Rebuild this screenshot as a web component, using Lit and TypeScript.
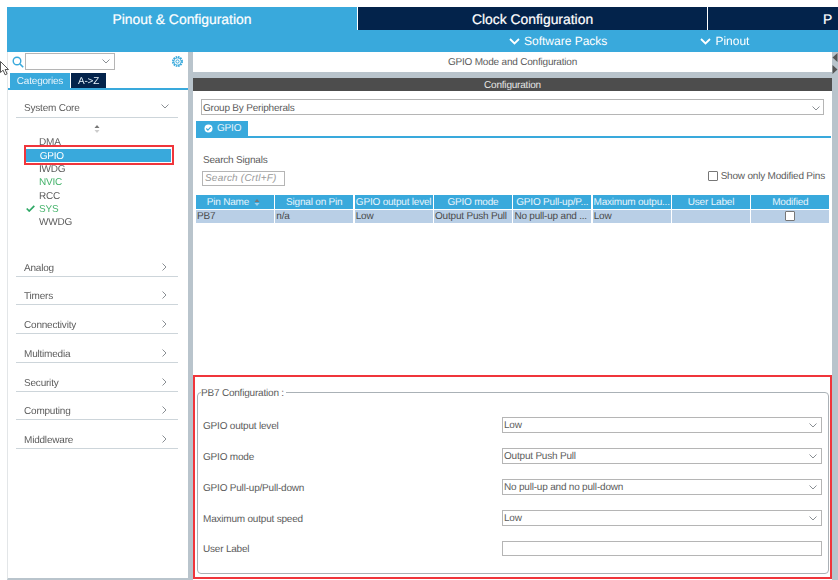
import { LitElement, html, css, svg } from "lit";
import { customElement } from "lit/decorators.js";

const chevDown = svg`<svg class="chev" width="8" height="5" viewBox="0 0 8 5"><path d="M.5.5L4 4 7.500.5" fill="none" stroke="#8a8f94" stroke-width="1"/></svg>`;
const chevRight = svg`<svg class="chevr" width="5" height="8" viewBox="0 0 5 8"><path d="M.5.5L4 4 .5 7.500" fill="none" stroke="#8a8f94" stroke-width="1"/></svg>`;
const chevWhite = svg`<svg width="11" height="7" viewBox="0 0 11 7"><path d="M1 1l4.500 4.500L10 1" fill="none" stroke="#fff" stroke-width="1.800"/></svg>`;

const cols = ["Pin Name", "Signal on Pin", "GPIO output level", "GPIO mode", "GPIO Pull-up/P...", "Maximum outpu...", "User Label", "Modified"];
const vals = ["PB7", "n/a", "Low", "Output Push Pull", "No pull-up and ...", "Low", "", ""];
const cats = ["Analog", "Timers", "Connectivity", "Multimedia", "Security", "Computing", "Middleware"];
const rows = [
  ["GPIO output level", "Low"],
  ["GPIO mode", "Output Push Pull"],
  ["GPIO Pull-up/Pull-down", "No pull-up and no pull-down"],
  ["Maximum output speed", "Low"],
];

@customElement("app-root")
export class AppRoot extends LitElement {
  static styles = css`
    :host { display: block; width: 838px; height: 580px; position: relative; overflow: hidden; background: #fff;
      font-family: "Liberation Sans", Arial, sans-serif; font-size: 10px; letter-spacing: -0.2px; text-rendering: geometricPrecision; color: #5c5c5c; }
    .page { width: 838px; height: 580px; box-sizing: border-box; padding: 7px 0 0 7px; filter: blur(0.3px); display: flex; flex-direction: column; }
    .tabs { display: flex; height: 23px; flex: none; gap: 1px; background: #fff; }
    .tab { display: flex; justify-content: center; align-items: center; font-size: 13.900px; letter-spacing: 0; color: #fff; box-sizing: border-box; -webkit-text-stroke: 0.2px #fff; }
    .tab.t1 { width: 350px; background: #39a9dc; }
    .tab.t2 { width: 349px; background: #03234b; }
    .tab.t3 { flex: 1; background: #03234b; justify-content: flex-start; padding-left: 115px; }
    .sub { height: 22px; flex: none; background: #39a9dc; color: #fff; font-size: 12px; letter-spacing: 0; display: flex; align-items: center; padding-left: 502px; box-sizing: border-box; gap: 93px; }
    .sub span { display: inline-flex; align-items: center; gap: 4px; }
    .body { flex: 1; display: flex; min-height: 0; }
    .side { width: 181px; flex: none; box-sizing: border-box; display: flex; flex-direction: column; background: #fff; border-left: 1px solid #e3e6e8; border-bottom: 2px solid #b9c4cc; }
    .sep { width: 5px; flex: none; background: #b9c4cc; }
    .search { display: flex; align-items: center; height: 17px; margin-top: 1px; padding-left: 4px; }
    .glass { margin-right: 1px; }
    .combo { width: 88px; height: 15px; border: 1px solid #b5b5b5; display: flex; align-items: center; justify-content: flex-end; }
    .combo .chev { margin-right: 4px; }
    .gear { margin-left: auto; margin-right: 4px; }
    .ctabs { display: flex; height: 15px; margin-top: 3px; padding-left: 2px; gap: 1px; align-items: stretch; }
    .ctab { display: flex; align-items: center; justify-content: center; color: #e8f4fb; padding-top: 1px; box-sizing: border-box; }
    .ctab.on { width: 60px; background: #39a9dc; }
    .ctab.off { width: 35px; background: #03234b; }
    .cline { height: 2px; background: #39a9dc; }
    .acc { margin: 0 10px 0 8px; }
    .head { height: 26px; display: flex; align-items: flex-end; justify-content: space-between; border-bottom: 1.5px solid #cdd5da; padding: 0 0 1px 8px; box-sizing: border-box; line-height: 13px; }
    .head.h0 { height: 27.500px; padding-bottom: 2px; }
    .head .chev { margin: 0 9px 6px 0; }
    .head .chevr { margin: 0 11px 4px 0; }
    .sort { display: flex; justify-content: center; margin: 7.500px 0 2.300px; height: 8px; }
    .items { display: flex; flex-direction: column; padding-left: 8px; }
    .item { height: 13.330px; line-height: 15px; padding-left: 15px; position: relative; }
    .item.sel { background: #39a9dc; color: #fff; margin-left: 2px; padding-left: 13.700px; box-sizing: border-box; width: 144.500px; }
    .item.sel::after { content: ""; position: absolute; left: -2px; right: -3.500px; top: -3.500px; bottom: -3.500px; border: 2px solid #f0353b; }
    .item.grn { color: #45b36b; }
    .item svg { position: absolute; left: 2px; top: 3px; }
    .cats { margin-top: 22.200px; display: flex; flex-direction: column; gap: 2.700px; }
    .main { width: 639px; flex: none; display: flex; flex-direction: column; background: #fff; }
    .mtitle { height: 20px; display: flex; align-items: center; justify-content: center; flex: none; padding-top: 1px; box-sizing: border-box; }
    .band { height: 6px; background: #b9c4cc; flex: none; }
    .dark { height: 13px; background: #4d4d4d; color: #e6e6e6; text-align: center; line-height: 15px; flex: none; }
    .group { margin: 8px 8px 0 8px; height: 16px; border: 1px solid #b5b5b5; border-bottom-width: 1.500px; display: flex; align-items: center; justify-content: space-between; padding: 2px 3px 0 1px; box-sizing: border-box; flex: none; }
    .gtab { margin: 6px 0 0 3px; width: 52px; height: 15px; background: #39a9dc; color: #e8f4fb; display: flex; align-items: center; gap: 4px; padding-left: 8px; box-sizing: border-box; flex: none; }
    .gline { height: 2px; margin: 0 1px 0 3px; background: #39a9dc; flex: none; }
    .sig { margin: 17px 7px 0 9px; flex: none; display: flex; justify-content: space-between; }
    .lab { line-height: 12px; padding-left: 1px; }
    .sinput { margin-top: 4px; width: 83px; height: 15px; box-sizing: border-box; border: 1px solid #b5b5b5; font-size: 10px; font-style: italic; color: #9a9a9a; line-height: 14px; padding-left: 2px; letter-spacing: 0.2px; }
    .mod { display: flex; align-items: center; gap: 3px; margin-top: 15px; height: 12px; }
    .cb { width: 8px; height: 8px; border: 1px solid #777; border-radius: 1px; background: #fff; display: inline-block; }
    .table { margin: 9px 0 0 3px; display: grid; grid-template-columns: repeat(8, 77.850px); column-gap: 1.500px; row-gap: 0.500px; flex: none; }
    .th { background: #39a9dc; color: #e8f4fb; height: 14px; line-height: 16px; text-align: center; white-space: nowrap; overflow: hidden; position: relative; }
    .th.first { padding-right: 14px; box-sizing: border-box; }
    .th svg { position: absolute; right: 14px; top: 4px; }
    .td { background: #b9cfe6; color: #4a4a4a; height: 13.500px; line-height: 13.500px; white-space: nowrap; overflow: hidden; display: flex; align-items: center; padding: 1px 0 0 1px; box-sizing: border-box; }
    .td.c { justify-content: center; padding: 0; }
    .spacer { flex: 1; }
    .cfg { height: 204px; margin-bottom: 1px; border: 2px solid #f0353b; box-sizing: border-box; padding: 15px 1px 2px 2px; flex: none; }
    .fs { height: 182px; box-sizing: border-box; border: 1px solid #aab1b6; border-radius: 4px; position: relative; padding: 24px 6px 0 5px; display: flex; flex-direction: column; gap: 15px; }
    .legend { position: absolute; left: 3px; top: -6.500px; background: #fff; padding-right: 2px; line-height: 13px; }
    .row { display: flex; justify-content: space-between; align-items: center; height: 16px; }
    .row > span { padding-top: 2px; }
    .sel2 { width: 320px; height: 16px; box-sizing: border-box; border: 1px solid #b5b5b5; border-bottom-width: 1.500px; display: flex; align-items: center; justify-content: space-between; padding: 1px 4px 0 1px; }
    .row.last { height: 15px; }
    .sel2.blank { height: 15px; border-bottom-width: 1px; }
    .rgt { flex: 1; background: #b9c4cc; position: relative; }
    .rgt svg { position: absolute; left: 0; top: 1px; }
    .cursor { position: absolute; left: 0; top: 61px; }
  `;

  render() {
    return html`
      <div class="page">
        <div class="tabs">
          <div class="tab t1">Pinout &amp; Configuration</div>
          <div class="tab t2">Clock Configuration</div>
          <div class="tab t3">P</div>
        </div>
        <div class="sub">
          <span>${chevWhite}Software Packs</span><span>${chevWhite}Pinout</span>
        </div>
        <div class="body">
          <div class="side">
            <div class="search">
              <svg class="glass" width="12" height="12" viewBox="0 0 12 12"><circle cx="5" cy="5" r="3.800" fill="none" stroke="#39a9dc" stroke-width="1.400"/><path d="M8 8l3.200 3.200" stroke="#39a9dc" stroke-width="1.600"/></svg>
              <div class="combo">${chevDown}</div>
              <svg class="gear" width="13" height="13" viewBox="0 0 13 13"><circle cx="6.500" cy="6.500" r="4.600" fill="none" stroke="#39a9dc" stroke-width="1.800" stroke-dasharray="1.600 0.800"/><circle cx="6.500" cy="6.500" r="3.600" fill="none" stroke="#39a9dc" stroke-width="0.800"/><circle cx="6.500" cy="6.500" r="1.600" fill="none" stroke="#39a9dc" stroke-width="1"/></svg>
            </div>
            <div class="ctabs"><div class="ctab on">Categories</div><div class="ctab off">A-&gt;Z</div></div>
            <div class="cline"></div>
            <div class="acc">
              <div class="head h0"><span>System Core</span>${chevDown}</div>
              <div class="sort"><svg width="6" height="8" viewBox="0 0 6 8"><path d="M3 0l2.500 3h-5z" fill="#777"/><path d="M3 8l2.500-3h-5z" fill="#ccc"/></svg></div>
              <div class="items">
                <div class="item">DMA</div>
                <div class="item sel">GPIO</div>
                <div class="item">IWDG</div>
                <div class="item grn">NVIC</div>
                <div class="item">RCC</div>
                <div class="item grn"><svg width="9" height="7" viewBox="0 0 9 7"><path d="M.7 3.500l2.500 2.500L8.300.8" fill="none" stroke="#2fa866" stroke-width="1.700"/></svg>SYS</div>
                <div class="item">WWDG</div>
              </div>
              <div class="cats">
                ${cats.map((c) => html`<div class="head"><span>${c}</span>${chevRight}</div>`)}
              </div>
            </div>
          </div>
          <div class="sep"></div>
          <div class="main">
            <div class="mtitle">GPIO Mode and Configuration</div>
            <div class="band"></div>
            <div class="dark">Configuration</div>
            <div class="group"><span>Group By Peripherals</span>${chevDown}</div>
            <div class="gtab"><svg width="9" height="9" viewBox="0 0 9 9"><circle cx="4.500" cy="4.500" r="4" fill="#fff"/><path d="M2.300 4.500l1.600 1.600 2.800-3" fill="none" stroke="#39a9dc" stroke-width="1.200"/></svg>GPIO</div>
            <div class="gline"></div>
            <div class="sig">
              <div><div class="lab">Search Signals</div><div class="sinput">Search (Crtl+F)</div></div>
              <div class="mod"><span class="cb"></span>Show only Modified Pins</div>
            </div>
            <div class="table">
              ${cols.map((c, i) => html`<div class="th ${i === 0 ? "first" : ""}">${c}${i === 0 ? svg`<svg width="6" height="7" viewBox="0 0 6 7"><path d="M3 0l2.500 3h-5z" fill="#777"/><path d="M3 7l2.500-3h-5z" fill="#9fd0ea"/></svg>` : ""}</div>`)}
              ${vals.map((v, i) => html`<div class="td ${i === 7 ? "c" : ""}">${i === 7 ? html`<span class="cb"></span>` : v}</div>`)}
            </div>
            <div class="spacer"></div>
            <div class="cfg">
              <div class="fs">
                <div class="legend">PB7 Configuration :</div>
                ${rows.map(([l, v]) => html`<div class="row"><span>${l}</span><div class="sel2"><span>${v}</span>${chevDown}</div></div>`)}
                <div class="row last"><span>User Label</span><div class="sel2 blank"></div></div>
              </div>
            </div>
          </div>
          <div class="rgt">
            <svg width="6" height="22" viewBox="0 0 6 22"><path d="M5.500 0v9L.5 4.500z" fill="#555"/><path d="M.5 12v9l5-4.500z" fill="#555"/></svg>
          </div>
        </div>
      </div>
      <svg class="cursor" width="9" height="15" viewBox="0 0 9 15"><path d="M.5.5v11l2.600-2.300 2 4.600 2-.9-2-4.400h3.400z" fill="#fff" stroke="#444" stroke-width="0.900"/></svg>
    `;
  }
}
